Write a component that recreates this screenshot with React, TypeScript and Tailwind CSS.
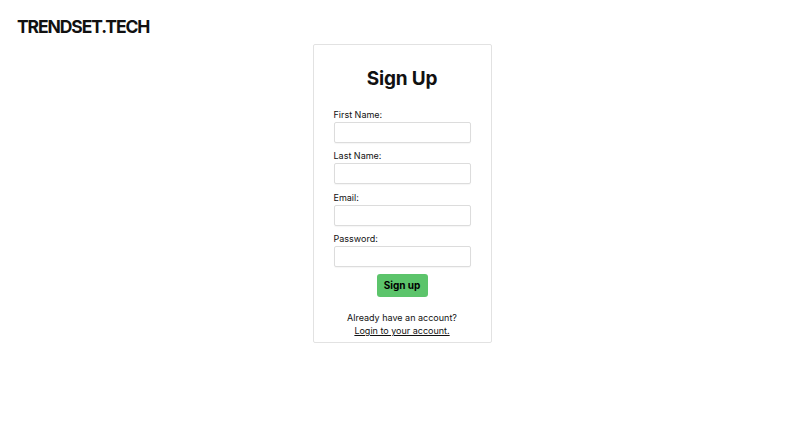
import React from "react";

const fields = ["First Name:", "Last Name:", "Email:", "Password:"];

export default function App() {
  return (
    <div className="min-h-[432px] bg-white text-[#111]" style={{ fontFamily: "Inter, 'Noto Sans', sans-serif" }}>
      <div className="pl-[17px] pt-[16px] h-[44px]">
        <div className="text-[17.5px] leading-[22px] font-bold tracking-[-1.1px]">TRENDSET.TECH</div>
      </div>
      <div className="flex justify-center">
        <div className="w-[179px] mr-[2px] border border-[#e2e2e2] rounded-[2px] px-[20px] pt-[20px] pb-[5px] flex flex-col">
          <h1 className="text-[19px] leading-[28px] font-bold text-center tracking-[-0.2px] mb-[16px]">Sign Up</h1>
          {fields.map((f) => (
            <div key={f} className="flex flex-col mb-[7.3px]">
              <label className="text-[9px] leading-[12px] mb-[1px]">{f}</label>
              <input
                type={f === "Password:" ? "password" : "text"}
                className="h-[21px] w-full border border-[#dcdcdc] rounded-[2px] bg-white outline-none shadow-[0_1px_1px_rgba(0,0,0,0.04)]"
              />
            </div>
          ))}
          <div className="flex justify-center">
            <button className="w-[51px] h-[23px] bg-[#5cc46b] rounded-[3px] text-[10px] font-bold text-black">
              Sign up
            </button>
          </div>
          <div className="text-center text-[9px] leading-[13px] mt-[14px]">
            <div>Already have an account?</div>
            <a href="#" className="underline">Login to your account.</a>
          </div>
        </div>
      </div>
    </div>
  );
}
